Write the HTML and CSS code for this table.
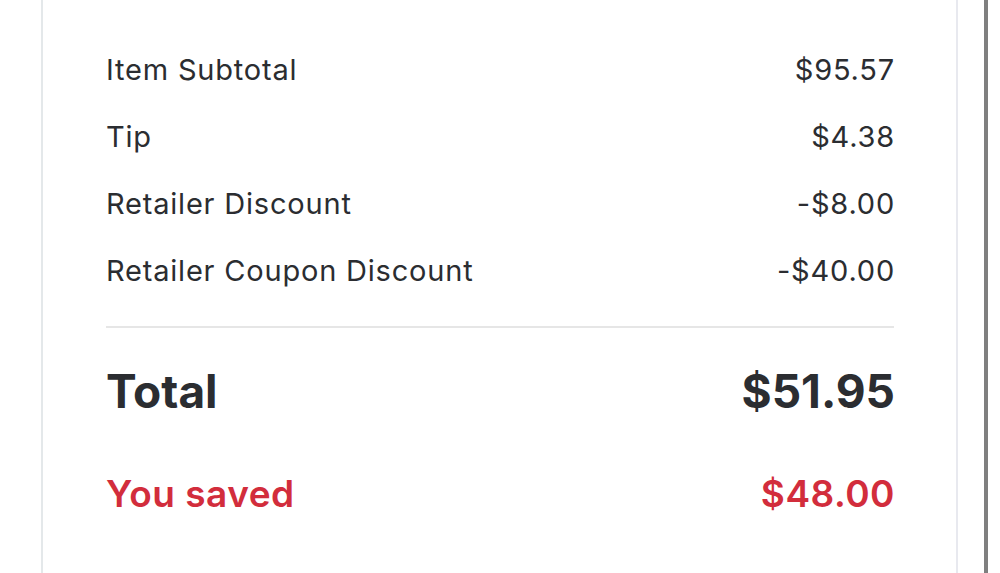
FILE: index.html
```html
<!DOCTYPE html>
<html lang="en">
<head>
    <meta charset="UTF-8">
    <meta name="viewport" content="width=device-width, initial-scale=1.0">
    <title>Order summary</title>
    <link rel="stylesheet" href="styles.css">
</head>
<body>
    <div class="page">
        <div class="card">
            <ul class="lines">
                <li><span>Item Subtotal</span><span>$95.57</span></li>
                <li><span>Tip</span><span>$4.38</span></li>
                <li><span>Retailer Discount</span><span>-$8.00</span></li>
                <li><span>Retailer Coupon Discount</span><span>-$40.00</span></li>
            </ul>
            <div class="divider"></div>
            <div class="total"><span>Total</span><span>$51.95</span></div>
            <div class="saved"><span>You saved</span><span>$48.00</span></div>
        </div>
        <div class="scrollbar"></div>
    </div>
</body>
</html>
```

FILE: styles.css
```css
*{padding:0;margin:0;list-style:none;box-sizing:border-box;}
html,body{height:100%;background:#fff;}
body{font-family:Inter,"Noto Sans",sans-serif;color:#2b2d31;}
.page{display:flex;height:100%;padding-left:41px;}
.card{width:917px;height:100%;border-left:2px solid #e4e8ea;border-right:2px solid #e8e9ef;padding:36px 61px 0 63px;}
.scrollbar{width:4px;height:100%;margin-left:26px;background:#7f7f7f;}
.lines li{display:flex;justify-content:space-between;align-items:center;height:67px;font-size:29px;letter-spacing:0.8px;}
.divider{height:2px;background:#e6e6e6;margin:22px 1px 0 0;}
.total{display:flex;justify-content:space-between;align-items:center;height:126px;font-size:46px;font-weight:700;}
.saved{display:flex;justify-content:space-between;align-items:center;height:78px;font-size:37px;font-weight:600;letter-spacing:0.5px;color:#d22d3c;}
```
